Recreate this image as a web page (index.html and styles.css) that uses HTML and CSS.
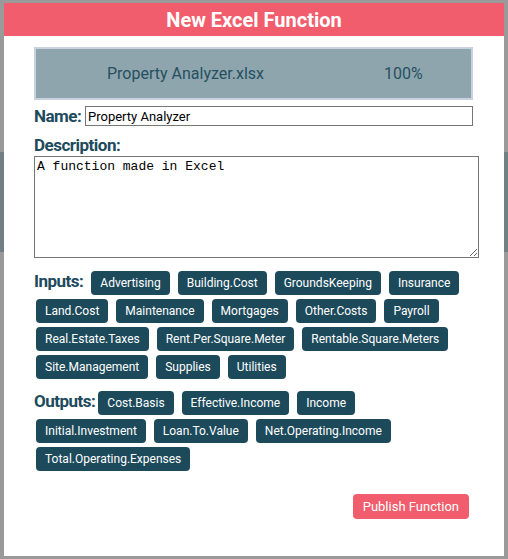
FILE: index.html
```html
<!DOCTYPE html>
<html>
<head>
<meta charset="utf-8">
<link rel="stylesheet" href="styles.css">
</head>
<body>
<div class="backdrop">
  <div class="bg-top"></div>
  <div class="bg-strip"></div>
</div>
<div class="modal">
  <div class="modal-header">New Excel Function</div>
  <div class="modal-body">
    <div class="file-bar">
      <span class="file-name">Property Analyzer.xlsx</span>
      <span class="file-pct">100%</span>
    </div>
    <div class="name-row">
      <label class="label">Name:</label>
      <input class="name-input" type="text" value="Property Analyzer">
    </div>
    <div class="label desc-label">Description:</div>
    <textarea class="desc">A function made in Excel</textarea>
    <div class="chips inputs">
      <span class="label chip-label">Inputs:</span>
      <span class="chip">Advertising</span>
      <span class="chip">Building.Cost</span>
      <span class="chip">GroundsKeeping</span>
      <span class="chip">Insurance</span>
      <span class="chip">Land.Cost</span>
      <span class="chip">Maintenance</span>
      <span class="chip">Mortgages</span>
      <span class="chip">Other.Costs</span>
      <span class="chip">Payroll</span>
      <span class="chip">Real.Estate.Taxes</span>
      <span class="chip">Rent.Per.Square.Meter</span>
      <span class="chip">Rentable.Square.Meters</span>
      <span class="chip">Site.Management</span>
      <span class="chip">Supplies</span>
      <span class="chip">Utilities</span>
    </div>
    <div class="chips outputs">
      <span class="label chip-label">Outputs:</span>
      <span class="chip">Cost.Basis</span>
      <span class="chip">Effective.Income</span>
      <span class="chip">Income</span>
      <span class="chip">Initial.Investment</span>
      <span class="chip">Loan.To.Value</span>
      <span class="chip">Net.Operating.Income</span>
      <span class="chip">Total.Operating.Expenses</span>
    </div>
    <div class="actions">
      <button class="publish">Publish Function</button>
    </div>
  </div>
</div>
</body>
</html>
```

FILE: styles.css
```css
html, body {
  margin: 0;
  padding: 0;
}
body {
  width: 508px;
  height: 559px;
  background: #9a9a9a;
  font-family: Roboto, "Liberation Sans", sans-serif;
  position: relative;
  overflow: hidden;
}
.backdrop {
  display: flex;
  flex-direction: column;
}
.bg-top {
  height: 152px;
}
.bg-strip {
  height: 100px;
  background: #727f84;
}
.modal {
  position: absolute;
  left: 4px;
  top: 3px;
  width: 500px;
  height: 553px;
  background: #ffffff;
  display: flex;
  flex-direction: column;
}
.modal-header {
  height: 33px;
  background: #f25d6d;
  color: #ffffff;
  font-weight: 700;
  font-size: 20px;
  line-height: 34px;
  text-align: center;
}
.modal-body {
  padding: 11px 25px 0 30px;
  display: flex;
  flex-direction: column;
}
.file-bar {
  width: 435px;
  height: 49px;
  border: 2px solid #c9d2dc;
  background: #8fa5ae;
  color: #25505f;
  font-size: 16px;
  display: flex;
  align-items: center;
}
.file-name {
  margin-left: 71px;
}
.file-pct {
  margin-left: 120px;
}
.label {
  color: #1d4a5c;
  font-weight: 700;
  font-size: 17px;
  letter-spacing: -0.5px;
}
.name-row {
  display: flex;
  align-items: center;
  margin-top: 5px;
  height: 22px;
}
.name-row .label {
  width: 51px;
}
.name-input {
  width: 382px;
  height: 16px;
  margin: 0;
  padding: 1px 2px;
  border: 1px solid #767676;
  font-family: Roboto, "Liberation Sans", sans-serif;
  font-size: 13px;
  color: #000;
}
.desc-label {
  margin-top: 8px;
  height: 21px;
  line-height: 21px;
}
.desc {
  width: 439px;
  height: 96px;
  margin: 0;
  padding: 2px;
  border: 1px solid #767676;
  font-family: "Liberation Mono", monospace;
  font-size: 13px;
  resize: both;
}
.chips {
  display: flex;
  flex-wrap: wrap;
  gap: 4px 8px;
  padding-left: 2px;
  width: 430px;
}
.inputs {
  margin-top: 13px;
}
.outputs {
  margin-top: 12px;
}
.chip-label {
  margin-left: -2px;
  line-height: 20px;
}
.outputs .chip-label {
  margin-right: -5px;
}
.chip {
  height: 24px;
  line-height: 24px;
  padding: 0 9px;
  background: #1d4a5b;
  color: #ffffff;
  font-size: 12px;
  border-radius: 4px;
}
.actions {
  display: flex;
  justify-content: flex-end;
  margin-top: 23px;
  padding-right: 10px;
}
.publish {
  height: 25px;
  padding: 0 10px;
  border: none;
  border-radius: 4px;
  background: #f25d6d;
  color: #ffffff;
  font-family: Roboto, "Liberation Sans", sans-serif;
  font-size: 13px;
}
```
